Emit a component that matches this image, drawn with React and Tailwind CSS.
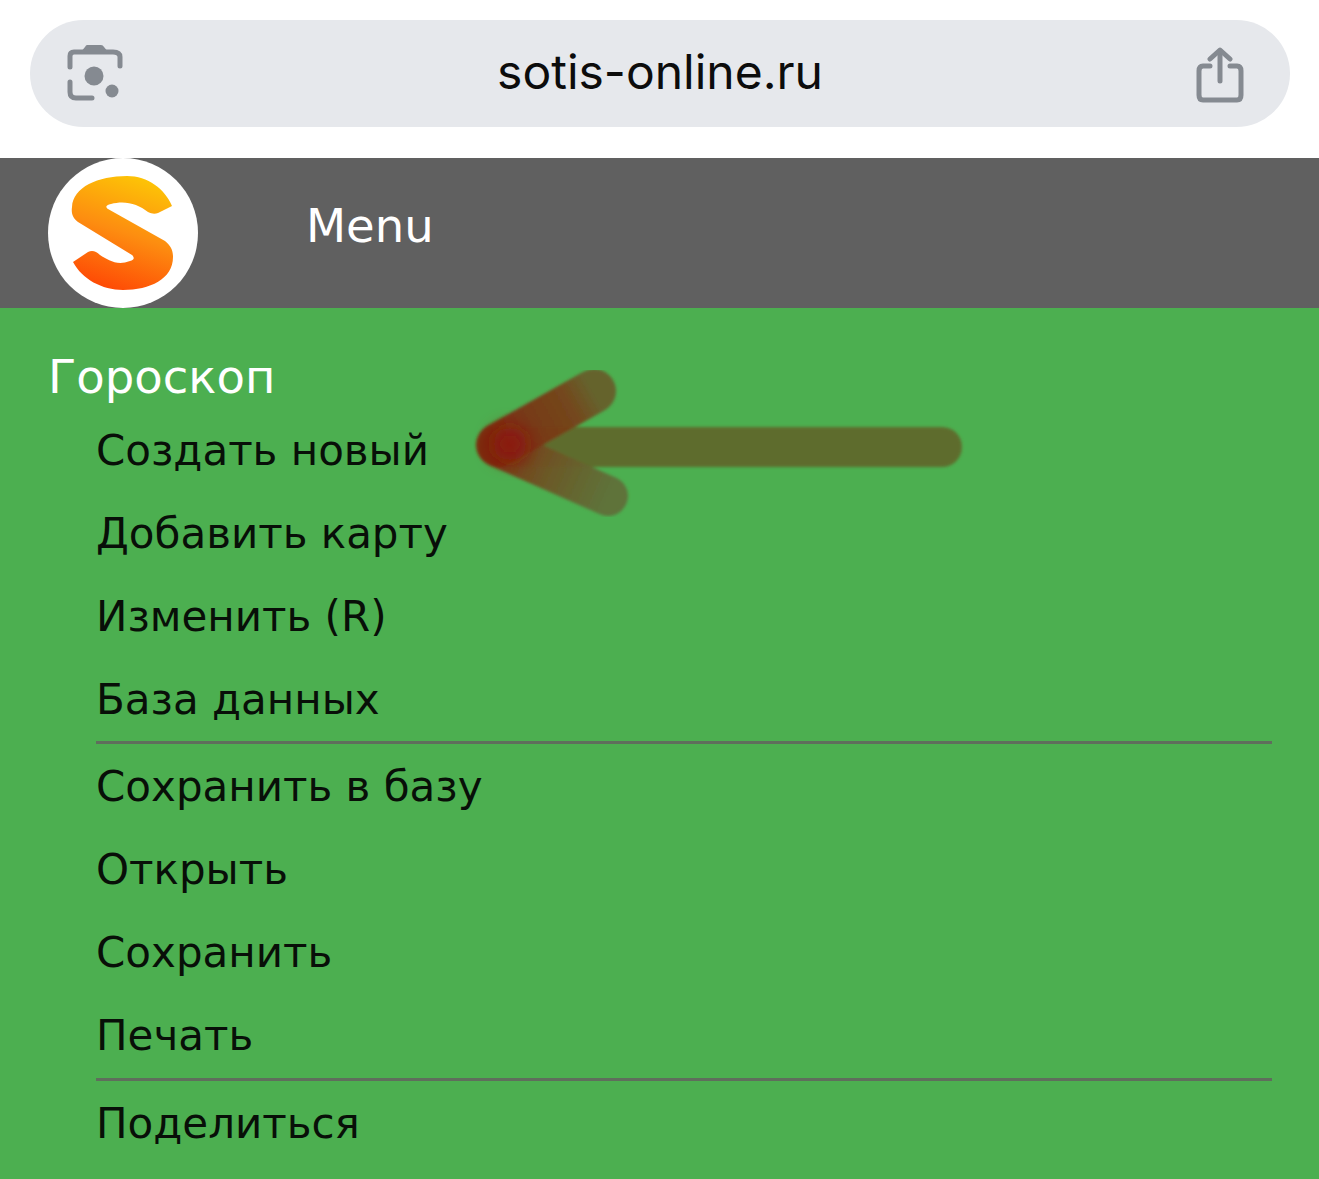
import React from 'react';

const GROUPS = [
  ['Создать новый', 'Добавить карту', 'Изменить (R)', 'База данных'],
  ['Сохранить в базу', 'Открыть', 'Сохранить', 'Печать'],
  ['Поделиться'],
];

function LensIcon() {
  return (
    <svg width="58" height="58" viewBox="0 0 58 58" fill="none" className="text-[#858a91] -ml-px">
      <path d="M4 22 V11 Q4 7 8 7 H47 Q54 7 54 12 V21" stroke="currentColor" strokeWidth="5" strokeLinecap="round" strokeLinejoin="round" />
      <path d="M21 0 H35 Q37 0 38 2 L43 8 H14 L19 2 Q20 0 21 0 Z" fill="currentColor" />
      <path d="M4 37 V47 Q4 53 10 53 H26" stroke="currentColor" strokeWidth="5" strokeLinecap="round" />
      <circle cx="28" cy="31" r="9.5" fill="currentColor" />
      <circle cx="46" cy="46" r="6.5" fill="currentColor" />
    </svg>
  );
}

function ShareIcon() {
  return (
    <svg width="48" height="56" viewBox="0 0 48 56" fill="none" stroke="#858a91" strokeWidth="5" strokeLinecap="round" strokeLinejoin="round" className="mt-[3px]">
      <path d="M14 19 H7 Q3 19 3 24 V48 Q3 53 7 53 H41 Q45 53 45 48 V24 Q45 19 41 19 H34" />
      <path d="M24 34 V4" />
      <path d="M14 12 L24 3 L34 12" />
    </svg>
  );
}

function Logo() {
  return (
    <svg width="106" height="116" viewBox="0 0 106 116">
      <defs>
        <linearGradient id="logoGrad" x1="0.68" y1="0" x2="0.38" y2="1">
          <stop offset="0" stopColor="#fdc506" />
          <stop offset="0.5" stopColor="#fd8d10" />
          <stop offset="1" stopColor="#fe4a05" />
        </linearGradient>
      </defs>
      <path
        d="M102 31 C95 14 78 1 57 1 C28 1 3 12 2 32 C1 39 3 43 8 47 L62 80 C65 83 64 85 60 86 C47 91 38 85 30 80 C26 76 22 75 18 77 L3 87 C12 104 32 115 53 115 C80 115 103 104 103 82 C103 75 101 71 95 66 L38 34 C35 32 36 30 41 29 C55 25 68 29 78 37 C82 39 85 39 88 38 Z"
        fill="url(#logoGrad)"
      />
    </svg>
  );
}

function Arrow() {
  return (
    <svg width="520" height="170" viewBox="0 0 520 170" fill="none" className="absolute left-[460px] top-[360px]" strokeLinecap="round">
      <defs>
        <filter id="soft" x="-10%" y="-20%" width="120%" height="140%">
          <feGaussianBlur stdDeviation="1.6" />
        </filter>
        <filter id="glow" x="-80%" y="-80%" width="260%" height="260%">
          <feGaussianBlur stdDeviation="9" />
        </filter>
        <linearGradient id="armUp" gradientUnits="userSpaceOnUse" x1="40" y1="86" x2="134" y2="33">
          <stop offset="0" stopColor="#7c2c10" />
          <stop offset="0.75" stopColor="#75441a" />
          <stop offset="1" stopColor="#66602c" />
        </linearGradient>
        <linearGradient id="armDown" gradientUnits="userSpaceOnUse" x1="40" y1="88" x2="146" y2="136">
          <stop offset="0" stopColor="#7c3210" />
          <stop offset="0.5" stopColor="#6c5626" />
          <stop offset="1" stopColor="#5f6f38" />
        </linearGradient>
      </defs>
      <g filter="url(#soft)">
        <path d="M60 87 L482 87" stroke="#5f6a2a" strokeOpacity="0.96" strokeWidth="40" />
        <path d="M40 88 L148 136" stroke="url(#armDown)" strokeOpacity="0.95" strokeWidth="40" />
        <path d="M38 85 L134 31" stroke="url(#armUp)" strokeOpacity="0.97" strokeWidth="44" />
      </g>
      <circle cx="50" cy="84" r="17" fill="#8c1208" filter="url(#glow)" />
    </svg>
  );
}

export default function App() {
  return (
    <div className="relative w-[1319px] h-[1179px] overflow-hidden bg-white font-['DejaVu_Sans',sans-serif]">
      {/* Address bar */}
      <div className="h-[158px] pt-5 pl-[30px] pr-[29px]">
        <div className="h-[107px] rounded-[54px] bg-[#e6e8ec] flex items-center justify-between pl-[37px] pr-[46px]">
          <LensIcon />
          <span className="font-['Inter',sans-serif] text-[48px] leading-none text-[#0c0c0c] -mt-[3px]">sotis-online.ru</span>
          <ShareIcon />
        </div>
      </div>

      {/* Header */}
      <div className="h-[150px] bg-[#606060] flex items-center pl-12">
        <div className="w-[150px] h-[150px] rounded-full bg-white flex items-center justify-center">
          <Logo />
        </div>
        <span className="ml-[108px] text-[46.5px] leading-none text-white -mt-[14px]">Menu</span>
      </div>

      {/* Menu */}
      <div className="h-[871px] bg-[#4caf50] pt-[41px]">
        <div className="pl-[48px] h-[60px] text-[46.5px] leading-[56px] text-white">Гороскоп</div>
        <div className="pl-[96px] pr-[47px]">
          {GROUPS.map((group, i) => (
            <div key={i} className={i > 0 ? 'border-t-[3px] border-[#5f6e5c] pt-px pb-px' : ''}>
              {group.map(item => (
                <div key={item} className="h-[83px] flex items-center text-[42px] leading-none text-[#080f08]">
                  {item}
                </div>
              ))}
            </div>
          ))}
        </div>
      </div>

      <Arrow />
    </div>
  );
}
